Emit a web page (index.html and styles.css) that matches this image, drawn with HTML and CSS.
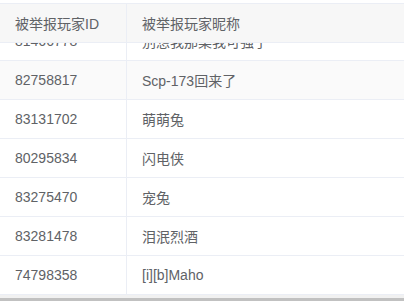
FILE: index.html
```html
<!DOCTYPE html>
<html lang="zh">
<head>
<meta charset="utf-8">
<link rel="stylesheet" href="styles.css">
</head>
<body>
<div class="table">
  <div class="row head">
    <div class="cell c1">被举报玩家ID</div>
    <div class="cell c2">被举报玩家昵称</div>
  </div>
  <div class="body">
    <div class="inner">
      <div class="row">
        <div class="cell c1">81466778</div>
        <div class="cell c2">别想我那菜我可强了</div>
      </div>
      <div class="row stripe">
        <div class="cell c1">82758817</div>
        <div class="cell c2">Scp-173回来了</div>
      </div>
      <div class="row">
        <div class="cell c1">83131702</div>
        <div class="cell c2">萌萌兔</div>
      </div>
      <div class="row">
        <div class="cell c1">80295834</div>
        <div class="cell c2">闪电侠</div>
      </div>
      <div class="row">
        <div class="cell c1">83275470</div>
        <div class="cell c2">宠兔</div>
      </div>
      <div class="row">
        <div class="cell c1">83281478</div>
        <div class="cell c2">泪泯烈酒</div>
      </div>
      <div class="row">
        <div class="cell c1">74798358</div>
        <div class="cell c2">[i][b]Maho</div>
      </div>
    </div>
  </div>
  <div class="track"></div>
  <div class="thumb"></div>
</div>
</body>
</html>
```
FILE: styles.css
```css
html, body {
  margin: 0;
  padding: 0;
  background: #fff;
}
.table {
  margin-top: 3px;
  border-top: 1px solid #ebeef5;
  font-family: "Liberation Sans", "Noto Sans CJK SC", sans-serif;
  font-size: 14px;
  color: #606266;
  width: 404px;
}
.row {
  display: flex;
  height: 38px;
  border-bottom: 1px solid #ebeef5;
  background: #fff;
}
.row.head {
  background: #f7f7f7;
  position: relative;
  z-index: 1;
}
.row.stripe {
  background: #fafafa;
}
.cell {
  display: flex;
  align-items: center;
  padding-left: 15px;
  box-sizing: border-box;
  white-space: nowrap;
}
.c1 {
  width: 127px;
  border-right: 1px solid #ebeef5;
}
.c2 {
  flex: 1;
}
.body {
  height: 252px;
  overflow: hidden;
}
.inner {
  margin-top: -21px;
}
.track {
  height: 3px;
  background: #f1f1f1;
}
.thumb {
  height: 4px;
  background: #c1c1c1;
}
```
